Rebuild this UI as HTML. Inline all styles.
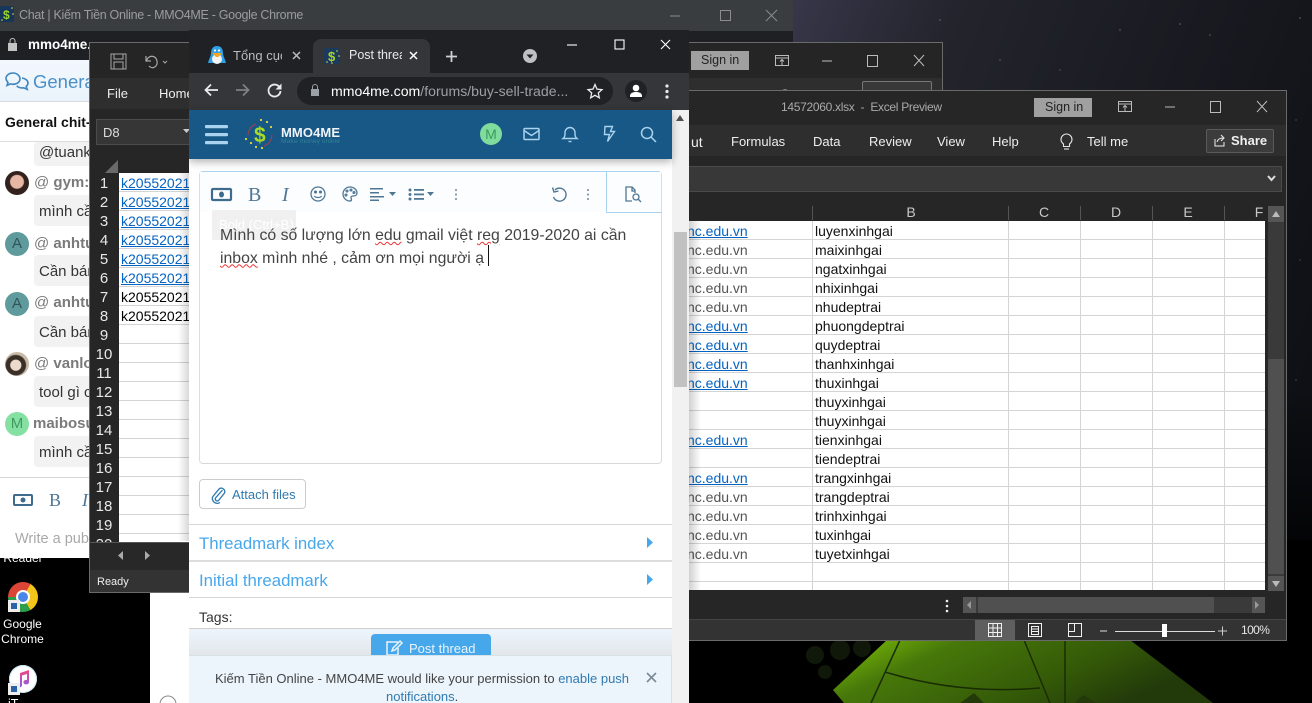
<!DOCTYPE html>
<html lang="vi"><head><meta charset="utf-8"><title>Chat</title>
<style>
html,body{margin:0;padding:0;width:1312px;height:703px;overflow:hidden;background:#000}
body{position:relative;font-family:"Liberation Sans","Noto Sans CJK SC",sans-serif}
.a{position:absolute}
.t{position:absolute;white-space:nowrap;line-height:1}
.w{position:absolute;overflow:hidden}
svg{position:absolute;overflow:visible}
.rn{position:absolute;left:0;width:28px;text-align:center;color:#e8e8e8;font-size:15px;line-height:19px;height:19px}
.k{position:absolute;left:31px;font-size:14px;line-height:18px;color:#0563c1;text-decoration:underline;white-space:nowrap}
.k.b{color:#000;text-decoration:none}
.lk{position:absolute;left:0;font-size:14px;line-height:18px;color:#0563c1;text-decoration:underline;white-space:nowrap}
.lk.g{color:#555;text-decoration:none}
.v{position:absolute;left:126px;font-size:14px;line-height:18px;color:#111;white-space:nowrap}
.bub{position:absolute;left:34px;width:80px;background:#f2f2f2;border-radius:4px}
.nm{position:absolute;font-size:15px;font-weight:bold;color:#7a7a7a;white-space:nowrap}
.mt{position:absolute;left:39px;font-size:15px;color:#333;white-space:nowrap}
.av{position:absolute;width:24px;height:24px;border-radius:50%;text-align:center;line-height:24px;font-size:15px}
.hd{position:absolute;top:205px;color:#c8c8c8;font-size:16px}
.rib{position:absolute;color:#eee;font-size:14px;white-space:nowrap}
</style></head><body>

<!-- wallpaper -->
<svg class="a" style="left:0;top:0" width="1312" height="703" viewBox="0 0 1312 703">
<defs>
<linearGradient id="sky" x1="0" y1="0" x2="1" y2="0.55"><stop offset="0" stop-color="#37374a"/><stop offset=".25" stop-color="#23242c"/><stop offset="1" stop-color="#0e1015"/></linearGradient>
<linearGradient id="sky2" x1="0" y1="0" x2="0" y2="1"><stop offset=".55" stop-color="#000" stop-opacity="0"/><stop offset=".85" stop-color="#000"/></linearGradient>
<linearGradient id="g1" x1="0" y1="0" x2="1" y2=".35"><stop offset="0" stop-color="#8fc80e"/><stop offset=".12" stop-color="#6aa608"/><stop offset=".3" stop-color="#47780a"/><stop offset=".7" stop-color="#345a08"/><stop offset="1" stop-color="#22390a"/></linearGradient>
</defs>
<rect x="790" y="0" width="522" height="703" fill="url(#sky)"/>
<rect x="790" y="0" width="522" height="703" fill="url(#sky2)"/>
<rect x="0" y="540" width="1312" height="163" fill="#000"/>
<g fill="#9a9aa8" opacity=".6"><circle cx="1180" cy="24" r=".8"/><circle cx="1210" cy="35" r=".7"/><circle cx="1120" cy="30" r=".7"/><circle cx="1300" cy="18" r=".8"/><circle cx="1296" cy="120" r=".6"/><circle cx="1000" cy="60" r=".7"/><circle cx="940" cy="20" r=".8"/><circle cx="1060" cy="70" r=".6"/><circle cx="1300" cy="260" r=".6"/><circle cx="1296" cy="380" r=".6"/></g>
<polygon points="887,640 1130,640 1213,703 844,703 833,690" fill="url(#g1)"/>
<path d="M900 640 L871 703 M1024 640 L1050 703 M1065 640 L1065 703 M885 672 Q960 695 1040 688" stroke="#1a2c04" stroke-width="1.500" fill="none"/>
<path d="M960 703l14-10 10 10zM1075 703l8-8 14 8z" fill="#24390a"/>
<g fill="#10180a"><circle cx="815" cy="655" r="9"/><circle cx="840" cy="650" r="10"/><circle cx="862" cy="648" r="9"/><circle cx="825" cy="672" r="7"/></g>
</svg>

<!-- white behind window -->
<div class="a" style="left:150px;top:558px;width:39px;height:145px;background:#fff"></div>
<svg style="left:158px;top:694px" width="22" height="20"><circle cx="10" cy="10" r="8" fill="none" stroke="#888"/></svg>

<!-- desktop icons -->
<div class="t" style="left:0;top:552px;width:46px;text-align:center;color:#fff;font-size:12px">Reader</div>
<div class="a" style="left:8px;top:582px;width:30px;height:30px;border-radius:50%;background:conic-gradient(from 30deg,#f3c41a 0 120deg,#2f9e4a 120deg 240deg,#db4437 240deg 360deg)"></div>
<div class="a" style="left:16px;top:590px;width:14px;height:14px;border-radius:50%;background:#4a86e8;border:2px solid #fff;box-sizing:border-box"></div>
<div class="a" style="left:8px;top:600px;width:12px;height:12px;background:#eee"></div>
<div class="a" style="left:11px;top:603px;width:6px;height:6px;background:#2a63a8"></div>
<div class="t" style="left:0;top:617px;width:45px;text-align:center;color:#fff;font-size:12px;line-height:15px;white-space:normal">Google Chrome</div>
<div class="a" style="left:9px;top:665px;width:28px;height:28px;border-radius:50%;background:#fff;box-shadow:inset 0 0 0 1px #bfe4f2"></div>
<svg style="left:15px;top:669px" width="16" height="20"><defs><linearGradient id="nt" x1="0" y1="0" x2="0" y2="1"><stop offset="0" stop-color="#f0477e"/><stop offset="1" stop-color="#8a5ee8"/></linearGradient></defs><path d="M5 4l9-3v12a2.800 2.300 0 11-2-2V5L7 6.500V16a2.800 2.300 0 11-2-2z" fill="url(#nt)"/></svg>
<div class="a" style="left:8px;top:683px;width:12px;height:12px;background:#eee"></div>
<div class="a" style="left:11px;top:686px;width:6px;height:6px;background:#2a63a8"></div>
<div class="t" style="left:8px;top:698px;color:#fff;font-size:12.500px">iT</div>

<!-- back chat window -->
<div class="w" style="left:0;top:0;width:793px;height:558px;background:#fff">
 <div class="a" style="left:0;top:0;width:793px;height:31px;background:#3a3d40"></div>
 <div class="a" style="left:0;top:31px;width:793px;height:29px;background:#1f2023"></div>
 <svg style="left:0;top:6px" width="16" height="18"><rect x="0" y="0" width="14" height="16" rx="2" fill="#16365a"/><text x="3" y="13" font-size="12" font-weight="bold" fill="#9fd42a" font-family="Liberation Sans">$</text><g fill="#e8d83a"><circle cx="12" cy="2" r=".8"/><circle cx="13" cy="8" r=".8"/><circle cx="2" cy="14" r=".8"/></g></svg>
 <div class="t" style="left:19px;top:9px;color:#9a9c9f;font-size:12.500px;letter-spacing:-.3px">Chat | Kiếm Tiền Online - MMO4ME - Google Chrome</div>
 <svg style="left:670px;top:8px" width="110" height="16"><path d="M0 8h10" stroke="#8a8c8f"/><rect x="50.500" y="2.500" width="10" height="10" fill="none" stroke="#8a8c8f"/><path d="M96 2l11 11M107 2L96 13" stroke="#8a8c8f"/></svg>
 <svg style="left:7px;top:38px" width="12" height="14"><rect x="1" y="5" width="9" height="8" fill="#c4c4c4"/><path d="M3 5V3a2.500 2.500 0 015 0v2" fill="none" stroke="#c4c4c4"/></svg>
 <div class="t" style="left:28px;top:38px;color:#fff;font-size:13.500px;font-weight:bold">mmo4me.</div>
 <div class="a" style="left:0;top:60px;width:793px;height:42px;background:linear-gradient(#f2f7fd,#eaf3fb);border-bottom:1px solid #d8d8d8;box-sizing:border-box"></div>
 <svg style="left:4px;top:71px" width="26" height="20" fill="none" stroke="#3e86c0" stroke-width="1.600"><path d="M9 2c-4 0-7 2.400-7 5.400 0 1.600 1 3 2 4l-1 3 3.500-1.500c1 .3 1.600.4 2.500.4 4 0 7-2.400 7-5.400S13 2 9 2z"/><path d="M18 7c3 .4 6 2.400 6 5 0 1.400-.7 2.500-1.800 3.400l1 3-3.500-1.600c-2.500 .5-5.500-.3-7-2"/></svg>
 <div class="t" style="left:33px;top:73px;color:#4a90c8;font-size:18.500px">General</div>
 <div class="t" style="left:5px;top:115px;color:#111;font-size:14px;font-weight:bold">General chit-</div>
 <div class="a" style="left:0;top:141px;width:90px;height:1px;background:#ddd"></div>
 <div class="bub" style="top:142px;height:24px"></div>
 <div class="mt" style="top:144px">@tuank</div>
 <div class="av" style="left:5px;top:171px;background:radial-gradient(circle at 50% 45%,#e8b8a4 0 36%,#33211e 42%)"></div>
 <div class="nm" style="left:34px;top:174px"><span style="font-weight:normal">@</span> gym:</div>
 <div class="bub" style="top:195px;height:31px"></div>
 <div class="mt" style="top:203px">mình cần</div>
 <div class="av" style="left:5px;top:232px;background:#5f9a9c;color:#2f5558">A</div>
 <div class="nm" style="left:34px;top:235px"><span style="font-weight:normal">@</span> anhtu</div>
 <div class="bub" style="top:255px;height:31px"></div>
 <div class="mt" style="top:263px">Cần bán</div>
 <div class="av" style="left:5px;top:292px;background:#5f9a9c;color:#2f5558">A</div>
 <div class="nm" style="left:34px;top:294px"><span style="font-weight:normal">@</span> anhtu</div>
 <div class="bub" style="top:316px;height:31px"></div>
 <div class="mt" style="top:324px">Cần bán</div>
 <div class="av" style="left:5px;top:352px;background:radial-gradient(circle at 45% 55%,#ecdacc 0 28%,#3a3028 32% 52%,#c8bca8 58%)"></div>
 <div class="nm" style="left:34px;top:355px"><span style="font-weight:normal">@</span> vanlo</div>
 <div class="bub" style="top:376px;height:31px"></div>
 <div class="mt" style="top:384px">tool gì c</div>
 <div class="av" style="left:5px;top:412px;background:#85e0a3;color:#3f9a5e">M</div>
 <div class="nm" style="left:33px;top:415px">maibosu</div>
 <div class="bub" style="top:436px;height:31px"></div>
 <div class="mt" style="top:444px">mình cần</div>
 <div class="a" style="left:0;top:477px;width:90px;height:1px;background:#d8d8d8"></div>
 <svg style="left:13px;top:494px" width="20" height="12"><rect x="1" y="1" width="18" height="10" rx="1" fill="#fff" stroke="#3f6b8c" stroke-width="2"/><circle cx="10" cy="6" r="2.500" fill="#3f6b8c"/></svg>
 <div class="t" style="left:49px;top:491px;color:#4a7698;font-size:18px;font-family:'Liberation Serif',serif">B</div>
 <div class="t" style="left:82px;top:491px;color:#4a7698;font-size:18px;font-style:italic;font-family:'Liberation Serif',serif">I</div>
 <div class="t" style="left:15px;top:532px;color:#a8a8a8;font-size:14.500px">Write a pub</div>
</div>

<!-- back excel window -->
<div class="w" style="left:89px;top:42px;width:854px;height:551px;background:#262626;border:1px solid #6a6a6a;box-sizing:border-box">
 <div class="a" style="left:0;top:0;width:854px;height:35px;background:#252525"></div>
 <div class="a" style="left:0;top:35px;width:854px;height:31px;background:#2e2e2e"></div>
 <svg style="left:20px;top:10px" width="90" height="20" fill="none" stroke="#a8a8a8"><rect x="1" y="1" width="15" height="15"/><rect x="4" y="1" width="9" height="5"/><rect x="4" y="9" width="9" height="7"/><path d="M39 13c4 4 9 0 8-5s-6-6-9-3l-2 3M36 3v5h5" stroke-width="1.200"/><path d="M53 8l2 2 2-2"/></svg>
 <div class="t" style="left:17px;top:44px;color:#eee;font-size:13px">File</div>
 <div class="t" style="left:69px;top:44px;color:#eee;font-size:13px">Home</div>
 <div class="a" style="left:6px;top:76px;width:100px;height:26px;background:#363636;border:1px solid #4c4c4c;box-sizing:border-box"></div>
 <div class="t" style="left:13px;top:83px;color:#ddd;font-size:13px">D8</div>
 <svg style="left:92px;top:85px" width="10" height="8"><path d="M1 1h7L4.500 5z" fill="#ccc"/></svg>
 <svg style="left:14px;top:116px" width="16" height="16"><path d="M14 1v13H1z" fill="#6a6a6a"/></svg>
 <div class="a" style="left:29px;top:130px;width:825px;height:369px;background:#fff repeating-linear-gradient(#fff 0 18px,#d4d4d4 18px 19px)"></div>
 <div class="a" style="left:0;top:130px;width:29px;height:369px;background:#262626;overflow:hidden">
  <div class="rn" style="top:1px">1</div><div class="rn" style="top:20px">2</div><div class="rn" style="top:39px">3</div><div class="rn" style="top:58px">4</div><div class="rn" style="top:77px">5</div><div class="rn" style="top:96px">6</div><div class="rn" style="top:115px">7</div><div class="rn" style="top:134px">8</div><div class="rn" style="top:153px">9</div><div class="rn" style="top:172px">10</div><div class="rn" style="top:191px">11</div><div class="rn" style="top:210px">12</div><div class="rn" style="top:229px">13</div><div class="rn" style="top:248px">14</div><div class="rn" style="top:267px">15</div><div class="rn" style="top:286px">16</div><div class="rn" style="top:305px">17</div><div class="rn" style="top:324px">18</div><div class="rn" style="top:343px">19</div><div class="rn" style="top:362px">20</div>
 </div>
 <div class="k" style="top:131px">k20552021</div><div class="k" style="top:150px">k20552021</div><div class="k" style="top:169px">k20552021</div><div class="k" style="top:188px">k20552021</div><div class="k" style="top:207px">k20552021</div><div class="k" style="top:226px">k20552021</div><div class="k b" style="top:245px">k20552021</div><div class="k b" style="top:264px">k20552021</div>
 <div class="a" style="left:0;top:499px;width:854px;height:28px;background:#282828;border-top:1px solid #555;box-sizing:border-box"></div>
 <svg style="left:28px;top:508px" width="40" height="10"><path d="M5 0v9L0 4.500z M27 0v9l5-4.500z" fill="#aaa"/></svg>
 <div class="a" style="left:0;top:527px;width:854px;height:23px;background:#333"></div>
 <div class="t" style="left:7px;top:534px;color:#eee;font-size:11px">Ready</div>
 <div class="a" style="left:601px;top:8px;width:58px;height:19px;background:#a0a0a0"></div>
 <div class="t" style="left:611px;top:11px;color:#222;font-size:12.500px">Sign in</div>
 <svg style="left:685px;top:10px" width="175" height="16" fill="none" stroke="#bbb"><rect x=".5" y="2.500" width="13" height="10"/><path d="M.5 5h13M7 12V7M5 8.500l2-2 2 2"/><path d="M47 8h10"/><rect x="92.500" y="2.500" width="10" height="11"/><path d="M139 2l10 11M149 2l-10 11"/></svg>
 <div class="a" style="left:772px;top:38px;width:68px;height:30px;border:1px solid #777;border-radius:2px;background:#383838"></div>
 <svg style="left:687px;top:45px" width="20" height="20" fill="none" stroke="#ddd"><circle cx="8" cy="8" r="6"/></svg>
 <div class="t" style="left:711px;top:46px;color:#eee;font-size:13px">Tell</div>
 <div class="t" style="left:790px;top:46px;color:#eee;font-size:13px;font-weight:bold">Sh</div>
</div>

<!-- front excel window -->
<div class="w" style="left:660px;top:90px;width:627px;height:551px;background:#262626;border:1px solid #6a6a6a;box-sizing:border-box">
 <div class="a" style="left:0;top:0;width:627px;height:34px;background:#262626"></div>
 <div class="a" style="left:0;top:34px;width:627px;height:31px;background:#2e2e2e"></div>
 <div class="t" style="left:120px;top:10px;color:#aaa;font-size:12px;letter-spacing:-.3px">14572060.xlsx &nbsp;-&nbsp; Excel Preview</div>
 <div class="a" style="left:373px;top:7px;width:58px;height:19px;background:#a0a0a0"></div>
 <div class="t" style="left:384px;top:10px;color:#222;font-size:12.500px">Sign in</div>
 <svg style="left:457px;top:9px" width="170" height="16" fill="none" stroke="#bbb"><rect x=".5" y="1.500" width="13" height="10"/><path d="M.5 4h13M7 11V6M5 7.500l2-2 2 2"/><path d="M47 7h10"/><rect x="92.500" y="1.500" width="10" height="11"/><path d="M139 1l10 11M149 1l-10 11"/></svg>
 <div class="rib" style="left:30px;top:43px">ut</div>
 <div class="rib" style="left:70px;top:43px;font-size:13px">Formulas</div>
 <div class="rib" style="left:152px;top:43px;font-size:13px">Data</div>
 <div class="rib" style="left:208px;top:43px;font-size:13px">Review</div>
 <div class="rib" style="left:276px;top:43px;font-size:13px">View</div>
 <div class="rib" style="left:331px;top:43px;font-size:13px">Help</div>
 <svg style="left:398px;top:41px" width="16" height="20" fill="none" stroke="#e6e6e6" stroke-width="1.100"><path d="M4.500 12C2.500 10.500 2 8.500 2 7.500a5.500 5.500 0 0111 0c0 1-.5 3-2.500 4.500v2.500h-6z"/><path d="M5 17h5"/></svg>
 <div class="rib" style="left:426px;top:43px;font-size:13px">Tell me</div>
 <div class="a" style="left:545px;top:38px;width:68px;height:24px;border:1px solid #5a5a5a;border-radius:2px;background:#3c3c3c;box-sizing:border-box"></div>
 <svg style="left:552px;top:43px" width="14" height="14" fill="none" stroke="#eee"><path d="M2 5v7h9V8M4 8c1-3 3-4 6-4M8 1l3 3-3 3"/></svg>
 <div class="t" style="left:570px;top:43px;color:#f0f0f0;font-size:13px;font-weight:bold">Share</div>
 <div class="a" style="left:0;top:75px;width:621px;height:26px;background:#383838;border:1px solid #4a4a4a;box-sizing:border-box"></div>
 <svg style="left:606px;top:84px" width="10" height="8" fill="none" stroke="#ddd" stroke-width="2"><path d="M1 1l3.500 4L8 1"/></svg>
 <div class="hd" style="left:237px;top:114px;width:26px;text-align:center;font-size:14px;line-height:15px">B</div>
 <div class="hd" style="left:372px;top:114px;width:22px;text-align:center;font-size:14px;line-height:15px">C</div>
 <div class="hd" style="left:444px;top:114px;width:22px;text-align:center;font-size:14px;line-height:15px">D</div>
 <div class="hd" style="left:516px;top:114px;width:22px;text-align:center;font-size:14px;line-height:15px">E</div>
 <div class="hd" style="left:591px;top:114px;width:14px;text-align:center;font-size:14px;line-height:15px">F</div>
 <div class="a" style="left:151px;top:115px;width:1px;height:14px;background:#555"></div>
 <div class="a" style="left:347px;top:115px;width:1px;height:14px;background:#555"></div>
 <div class="a" style="left:419px;top:115px;width:1px;height:14px;background:#555"></div>
 <div class="a" style="left:491px;top:115px;width:1px;height:14px;background:#555"></div>
 <div class="a" style="left:563px;top:115px;width:1px;height:14px;background:#555"></div>
 <div class="a" style="left:0;top:130px;width:604px;height:369px;background:repeating-linear-gradient(#fff 0 18px,#d4d4d4 18px 19px);overflow:hidden">
  <div class="a" style="left:151px;top:0;width:1px;height:369px;background:#d4d4d4"></div>
  <div class="a" style="left:347px;top:0;width:1px;height:369px;background:#d4d4d4"></div>
  <div class="a" style="left:419px;top:0;width:1px;height:369px;background:#d4d4d4"></div>
  <div class="a" style="left:491px;top:0;width:1px;height:369px;background:#d4d4d4"></div>
  <div class="a" style="left:563px;top:0;width:1px;height:369px;background:#d4d4d4"></div>
  <div class="a" style="left:26px;top:0;width:122px;height:369px">
   <div class="lk" style="top:1px">nc.edu.vn</div><div class="lk g" style="top:20px">nc.edu.vn</div><div class="lk g" style="top:39px">nc.edu.vn</div><div class="lk g" style="top:58px">nc.edu.vn</div><div class="lk g" style="top:77px">nc.edu.vn</div><div class="lk" style="top:96px">nc.edu.vn</div><div class="lk" style="top:115px">nc.edu.vn</div><div class="lk" style="top:134px">nc.edu.vn</div><div class="lk" style="top:153px">nc.edu.vn</div><div class="lk" style="top:210px">nc.edu.vn</div><div class="lk" style="top:248px">nc.edu.vn</div><div class="lk g" style="top:267px">nc.edu.vn</div><div class="lk g" style="top:286px">nc.edu.vn</div><div class="lk g" style="top:305px">nc.edu.vn</div><div class="lk g" style="top:324px">nc.edu.vn</div>
  </div>
  <div class="v" style="left:154px;top:1px">luyenxinhgai</div><div class="v" style="left:154px;top:20px">maixinhgai</div><div class="v" style="left:154px;top:39px">ngatxinhgai</div><div class="v" style="left:154px;top:58px">nhixinhgai</div><div class="v" style="left:154px;top:77px">nhudeptrai</div><div class="v" style="left:154px;top:96px">phuongdeptrai</div><div class="v" style="left:154px;top:115px">quydeptrai</div><div class="v" style="left:154px;top:134px">thanhxinhgai</div><div class="v" style="left:154px;top:153px">thuxinhgai</div><div class="v" style="left:154px;top:172px">thuyxinhgai</div><div class="v" style="left:154px;top:191px">thuyxinhgai</div><div class="v" style="left:154px;top:210px">tienxinhgai</div><div class="v" style="left:154px;top:229px">tiendeptrai</div><div class="v" style="left:154px;top:248px">trangxinhgai</div><div class="v" style="left:154px;top:267px">trangdeptrai</div><div class="v" style="left:154px;top:286px">trinhxinhgai</div><div class="v" style="left:154px;top:305px">tuxinhgai</div><div class="v" style="left:154px;top:324px">tuyetxinhgai</div>
 </div>
 <!-- vscroll -->
 <div class="a" style="left:607px;top:115px;width:16px;height:385px;background:#3a3a3a"></div>
 <div class="a" style="left:607px;top:115px;width:16px;height:16px;background:#555"></div>
 <svg style="left:611px;top:120px" width="9" height="6"><path d="M0 6h8L4 0z" fill="#bbb"/></svg>
 <div class="a" style="left:607px;top:268px;width:16px;height:215px;background:#505050"></div>
 <div class="a" style="left:607px;top:485px;width:16px;height:15px;background:#555"></div>
 <svg style="left:611px;top:490px" width="9" height="6"><path d="M0 0h8L4 6z" fill="#bbb"/></svg>
 <!-- hscroll -->
 <svg style="left:284px;top:508px" width="4" height="14"><circle cx="2" cy="2" r="1.300" fill="#eee"/><circle cx="2" cy="7" r="1.300" fill="#eee"/><circle cx="2" cy="12" r="1.300" fill="#eee"/></svg>
 <div class="a" style="left:302px;top:506px;width:302px;height:16px;background:#3a3a3a"></div>
 <div class="a" style="left:302px;top:506px;width:13px;height:16px;background:#555"></div>
 <div class="a" style="left:317px;top:506px;width:236px;height:16px;background:#505050"></div>
 <div class="a" style="left:591px;top:506px;width:13px;height:16px;background:#555"></div>
 <svg style="left:305px;top:510px" width="296" height="9"><path d="M5 0v8L1 4z M289 0v8l4-4z" fill="#999"/></svg>
 <!-- status -->
 <div class="a" style="left:0;top:528px;width:627px;height:22px;background:#333;border-top:1px solid #444;box-sizing:border-box"></div>
 <div class="a" style="left:314px;top:529px;width:40px;height:21px;background:#5f5f5f"></div>
 <svg style="left:327px;top:532px" width="180" height="16" fill="none" stroke="#f0f0f0"><rect x=".5" y=".5" width="13" height="13"/><path d="M.5 5h13M.5 9.500h13M5 .5v13M9.500 .5v13"/><rect x="40.500" y=".5" width="13" height="13"/><rect x="43.500" y="3.500" width="7" height="8"/><path d="M44 6h6M44 8.500h6"/><rect x="80.500" y=".5" width="13" height="13"/><path d="M80.500 8.500h6v-8"/></svg>
 <svg style="left:438px;top:533px" width="120" height="14"><path d="M1 7h7M16 7.500h100" stroke="#ddd" fill="none"/></svg>
 <div class="a" style="left:501px;top:533px;width:5px;height:13px;background:#fff"></div>
 <svg style="left:556px;top:534px" width="12" height="12" stroke="#ccc"><path d="M1 6h9M5.500 1.500v9"/></svg>
 <div class="t" style="left:580px;top:533px;color:#e6e6e6;font-size:12px;letter-spacing:-.6px">100%</div>
</div>

<!-- shadow from chrome window -->
<div class="a" style="left:689px;top:221px;width:12px;height:369px;background:linear-gradient(90deg,rgba(0,0,0,.18),rgba(0,0,0,0))"></div>
<div class="a" style="left:178px;top:173px;width:11px;height:368px;background:linear-gradient(270deg,rgba(0,0,0,.15),rgba(0,0,0,0))"></div>

<!-- front chrome window -->
<div class="w" style="left:189px;top:30px;width:500px;height:673px;background:#202124">
 <!-- tabs -->
 <div class="a" style="left:124px;top:9px;width:117px;height:34px;background:#35363a;border-radius:8px 8px 0 0"></div>
 <svg style="left:19px;top:16px" width="18" height="18"><path d="M9 0c4 0 6 3 6 7 0 3 2 6 3 10H0c1-4 3-7 3-10 0-4 2-7 6-7z" fill="#2f9fe6"/><ellipse cx="9" cy="13" rx="5" ry="5" fill="#f4f4f4"/><path d="M4 7h9l1 1-4 3H8z" fill="#f5a623"/><circle cx="7" cy="4.500" r="1.100" fill="#fff"/><circle cx="11" cy="4.500" r="1.100" fill="#fff"/></svg>
 <div class="t" style="left:44px;top:19px;width:49px;overflow:hidden;color:#b8bbbf;font-size:13px">Tổng cục</div>
 <svg style="left:103px;top:21px" width="10" height="10" stroke="#b8bbbf" stroke-width="1.500"><path d="M1 1l7 7M8 1L1 8"/></svg>
 <div class="a" style="left:135px;top:18px;width:16px;height:16px;background:#1b3a5c;border-radius:2px"></div>
 <div class="t" style="left:139px;top:20px;color:#a8d82a;font-size:13px;font-weight:bold">$</div>
 <svg style="left:135px;top:18px" width="16" height="16" fill="#e8d83a"><circle cx="13" cy="3" r=".8"/><circle cx="15" cy="8" r=".8"/><circle cx="3" cy="14" r=".8"/><circle cx="8" cy="15" r=".8"/></svg>
 <div class="t" style="left:160px;top:19px;width:53px;overflow:hidden;color:#e8eaed;font-size:12.500px">Post threa</div>
 <svg style="left:220px;top:21px" width="10" height="10" stroke="#fff" stroke-width="1.500"><path d="M1 1l7 7M8 1L1 8"/></svg>
 <svg style="left:256px;top:20px" width="14" height="14" stroke="#cfd1d4" stroke-width="1.800"><path d="M1 6.500h11M6.500 1v11"/></svg>
 <svg style="left:333px;top:18px" width="16" height="16"><circle cx="8" cy="8" r="7" fill="#bdc1c6"/><path d="M4.500 6.500h7L8 10.500z" fill="#202124"/></svg>
 <svg style="left:378px;top:9px" width="110" height="14" fill="none" stroke="#fff" stroke-width="1.100"><path d="M0 6h10"/><rect x="48" y="1" width="9" height="9"/><path d="M94 1l9 9M103 1l-9 9"/></svg>
 <!-- toolbar -->
 <div class="a" style="left:0;top:43px;width:500px;height:37px;background:#35363a"></div>
 <svg style="left:15px;top:53px" width="15" height="14" fill="none" stroke="#e8eaed" stroke-width="1.800"><path d="M14 7H2M7 1.500L1.500 7 7 12.500"/></svg>
 <svg style="left:46px;top:53px" width="15" height="14" fill="none" stroke="#7d8085" stroke-width="1.800"><path d="M1 7h12M8 1.500L13.500 7 8 12.500"/></svg>
 <svg style="left:78px;top:53px" width="15" height="15"><path d="M12.500 4.200A6 6 0 1 0 13.500 8" fill="none" stroke="#e8eaed" stroke-width="1.800"/><path d="M14.500 .5v6h-6z" fill="#e8eaed"/></svg>
 <div class="a" style="left:108px;top:47px;width:316px;height:28px;background:#202124;border-radius:14px"></div>
 <svg style="left:120px;top:53px" width="12" height="14"><rect x="2" y="6" width="8" height="7" fill="#9aa0a6"/><path d="M3.500 6V4a2.500 2.500 0 015 0v2" fill="none" stroke="#9aa0a6"/></svg>
 <div class="t" style="left:142px;top:54px;color:#fff;font-size:14.100px">mmo4me.com<span style="color:#9aa0a6">/forums/buy-sell-trade...</span></div>
 <svg style="left:398px;top:53px" width="16" height="15" fill="none" stroke="#e8eaed" stroke-width="1.300"><path d="M8 1.500l2 4.600 5 .5-3.700 3.300 1 4.900L8 12.300 3.700 14.800l1-4.900L1 6.600l5-.5z"/></svg>
 <svg style="left:436px;top:50px" width="22" height="22"><circle cx="11" cy="11" r="11" fill="#202124"/><circle cx="11" cy="8" r="3.300" fill="#fff"/><path d="M5 16c0-3 3-4 6-4s6 1 6 4v1H5z" fill="#fff"/></svg>
 <svg style="left:475px;top:54px" width="6" height="16" fill="#e8eaed"><circle cx="3" cy="2" r="1.600"/><circle cx="3" cy="7.500" r="1.600"/><circle cx="3" cy="13" r="1.600"/></svg>

 <!-- page -->
 <div class="a" style="left:0;top:80px;width:483px;height:593px;background:#fff"></div>
 <div class="a" style="left:483px;top:80px;width:17px;height:593px;background:#f1f1f1"></div>
 <svg style="left:487px;top:85px" width="9" height="6"><path d="M0 6h8L4 0z" fill="#505050"/></svg>
 <div class="a" style="left:485px;top:202px;width:13px;height:155px;background:#c1c1c1"></div>
 <!-- header -->
 <div class="a" style="left:0;top:80px;width:483px;height:49px;background:#185886;box-shadow:0 3px 8px rgba(0,0,0,.3)"></div>
 <svg style="left:16px;top:95px" width="23" height="20" fill="#a9d3ee"><rect y="0" width="23" height="3.300" rx="1"/><rect y="8" width="23" height="3.300" rx="1"/><rect y="16" width="23" height="3.300" rx="1"/></svg>
 <svg style="left:55px;top:89px" width="34" height="32" fill="none"><path d="M4 16A12 12 0 0112 5" stroke="#a93e4c" stroke-width="1"/><path d="M28 16A12 12 0 0120 27" stroke="#a93e4c" stroke-width="1"/><g fill="#e8d83a"><circle cx="7" cy="24" r="1.100"/><circle cx="12" cy="28" r="1.100"/><circle cx="18" cy="29" r="1.100"/><circle cx="17" cy="1" r="1.100"/><circle cx="23" cy="3" r="1.100"/><circle cx="27" cy="8" r="1.100"/><circle cx="2" cy="20" r="1.100"/></g><text x="10" y="23" font-family="Liberation Sans" font-weight="bold" font-size="21" fill="#a8dc2a">$</text></svg>
 <div class="t" style="left:92px;top:96px;color:#f0f4f7;font-size:13px;font-weight:bold;letter-spacing:.1px">MMO4ME</div>
 <div class="t" style="left:92px;top:109px;color:#2f8296;font-size:6.800px">Make money online</div>
 <div class="a" style="left:291px;top:93px;width:22px;height:22px;border-radius:50%;background:#7fdc9c;color:#3c9a5e;font-size:14px;text-align:center;line-height:22px">M</div>
 <svg style="left:334px;top:97px" width="17" height="15" fill="none" stroke="#a9d3ee" stroke-width="1.500"><rect x="1" y="1.500" width="15" height="11" rx="1"/><path d="M1 3.500l7.500 5 7.500-5"/></svg>
 <svg style="left:372px;top:96px" width="18" height="17" fill="none" stroke="#a9d3ee" stroke-width="1.400"><path d="M2 12.500c2-1.500 2-3 2-6a5 5 0 0110 0c0 3 0 4.500 2 6z"/><path d="M7.500 15.500h3"/></svg>
 <svg style="left:412px;top:95px" width="16" height="18" fill="none" stroke="#a9d3ee" stroke-width="1.400"><path d="M4 1.500h7.500L9.500 6.500h4L6.500 16.500l2-7h-5z"/></svg>
 <svg style="left:451px;top:96px" width="17" height="17" fill="none" stroke="#a9d3ee" stroke-width="1.500"><circle cx="7" cy="7" r="5.500"/><path d="M11 11l5 5"/></svg>

 <!-- editor -->
 <div class="a" style="left:10px;top:141px;width:463px;height:293px;border:1px solid #a8d4f0;border-bottom-color:#d8d8d8;border-left-color:#c7e2f4;border-right-color:#c7e2f4;border-radius:4px;box-sizing:border-box;background:#fff"></div>
 <div class="a" style="left:11px;top:142px;width:461px;height:40px;background:#fbfdff"></div>
 <div class="a" style="left:417px;top:141px;width:1px;height:42px;background:#a8d4f0"></div>
 <div class="a" style="left:417px;top:182px;width:56px;height:1px;background:#a8d4f0"></div>
 <svg style="left:22px;top:158px" width="22" height="13"><rect x="1" y="1" width="19" height="11" rx="1" fill="#fff" stroke="#3f6b8c" stroke-width="2.200"/><ellipse cx="10.500" cy="6.500" rx="2.500" ry="3" fill="#3f6b8c"/></svg>
 <div class="t" style="left:59px;top:155px;color:#4f7794;font-size:20px;font-family:'Liberation Serif',serif">B</div>
 <div class="t" style="left:93px;top:155px;color:#4f7794;font-size:20px;font-style:italic;font-family:'Liberation Serif',serif">I</div>
 <svg style="left:121px;top:156px" width="16" height="16" fill="none" stroke="#4f7794" stroke-width="1.300"><circle cx="8" cy="8" r="7"/><circle cx="5.500" cy="6" r=".9" fill="#4f7794"/><circle cx="10.500" cy="6" r=".9" fill="#4f7794"/><path d="M4.500 10c1 2 6 2 7 0"/></svg>
 <svg style="left:153px;top:156px" width="16" height="16" fill="none" stroke="#4f7794" stroke-width="1.300"><path d="M8 1a7 7 0 100 14c2 0 1.500-2 1-3s.5-2 2-2 4 0 4-3c0-3-3-6-7-6z"/><circle cx="5" cy="5" r=".9"/><circle cx="9" cy="4" r=".9"/><circle cx="12" cy="6.500" r=".9"/><circle cx="4" cy="9" r=".9"/></svg>
 <svg style="left:181px;top:158px" width="28" height="13" fill="#4f7794"><rect width="13" height="1.500"/><rect y="4" width="9" height="1.500"/><rect y="8" width="14" height="1.500"/><rect y="11.500" width="9" height="1.500"/><path d="M19 4h7l-3.500 4z"/></svg>
 <svg style="left:219px;top:158px" width="28" height="13" fill="#4f7794"><circle cx="2" cy="2" r="1.500"/><circle cx="2" cy="6.500" r="1.500"/><circle cx="2" cy="11" r="1.500"/><rect x="6" y="1" width="10" height="1.800"/><rect x="6" y="5.500" width="10" height="1.800"/><rect x="6" y="10" width="10" height="1.800"/><path d="M19 4h7l-3.500 4z"/></svg>
 <svg style="left:265px;top:158px" width="4" height="13" fill="#8a9aa6"><circle cx="2" cy="2" r="1.100"/><circle cx="2" cy="6.500" r="1.100"/><circle cx="2" cy="11" r="1.100"/></svg>
 <svg style="left:362px;top:156px" width="17" height="16" fill="none" stroke="#4f7794" stroke-width="1.400"><path d="M4 4a6.500 6.500 0 11-1.500 7"/><path d="M1.500 1.500L3 6l4.500-1"/></svg>
 <svg style="left:397px;top:158px" width="4" height="13" fill="#8a9aa6"><circle cx="2" cy="2" r="1.100"/><circle cx="2" cy="6.500" r="1.100"/><circle cx="2" cy="11" r="1.100"/></svg>
 <svg style="left:435px;top:156px" width="18" height="17" fill="none" stroke="#4f7794" stroke-width="1.300"><path d="M8 15H2V1h6l3 3v3M8 1v4h3"/><circle cx="12" cy="11" r="3"/><path d="M14 13l3 3"/></svg>
 <!-- tooltip -->
 <div class="a" style="left:23px;top:180px;width:84px;height:30px;background:#f0f0f0;border-radius:2px"></div>
 <div class="t" style="left:30px;top:188px;color:#fff;font-size:13px">Bold (Ctrl+B)</div>
 <div class="t" style="left:31px;top:195px;color:#444;font-size:15.800px;line-height:22.500px;white-space:nowrap">Mình có số lượng lớn <span style="text-decoration:underline wavy #e33 1px">edu</span> gmail việt <span style="text-decoration:underline wavy #e33 1px">reg</span> 2019-2020 ai cần<br><span style="text-decoration:underline wavy #e33 1px">inbox</span> mình nhé , cảm ơn mọi người ạ</div>
 <div class="a" style="left:299px;top:215px;width:1px;height:21px;background:#111"></div>

 <!-- attach -->
 <div class="a" style="left:10px;top:449px;width:107px;height:30px;border:1px solid #ccc;border-radius:4px;box-sizing:border-box;background:#fff"></div>
 <svg style="left:21px;top:456px" width="16" height="17" fill="none" stroke="#2f7ab0" stroke-width="1.300"><path d="M12.500 4l-7 8a2 2 0 003 2.500l6-7.500a3.500 3.500 0 00-5.500-4l-6.500 8a5 5 0 007.500 5.500"/></svg>
 <div class="t" style="left:43px;top:458px;color:#2f7ab0;font-size:13px">Attach files</div>
 <div class="a" style="left:0;top:494px;width:483px;height:1px;background:#d6d6d6"></div>
 <div class="t" style="left:10px;top:506px;color:#47a7eb;font-size:16.800px">Threadmark index</div>
 <svg style="left:457px;top:506px" width="8" height="13"><path d="M1 1l6 5.500-6 5.500z" fill="#47a7eb"/></svg>
 <div class="a" style="left:0;top:530px;width:483px;height:2px;background:#dcdcdc"></div>
 <div class="t" style="left:10px;top:543px;color:#47a7eb;font-size:16.800px">Initial threadmark</div>
 <svg style="left:457px;top:543px" width="8" height="13"><path d="M1 1l6 5.500-6 5.500z" fill="#47a7eb"/></svg>
 <div class="a" style="left:0;top:567px;width:483px;height:1px;background:#d6d6d6"></div>
 <div class="t" style="left:10px;top:580px;color:#333;font-size:14px">Tags:</div>
 <div class="a" style="left:0;top:598px;width:483px;height:28px;background:linear-gradient(#edf5fc,#e2e6ea);border-top:1px solid #cfcfcf;box-sizing:border-box"></div>
 <div class="a" style="left:182px;top:604px;width:120px;height:26px;background:#47a7eb;border-radius:4px 4px 0 0"></div>
 <svg style="left:196px;top:609px" width="20" height="18" fill="none" stroke="#e8f4fc" stroke-width="1.500"><path d="M13 3H2v13h11V9"/><path d="M7 12l1-3 7-7 2 2-7 7z"/></svg>
 <div class="t" style="left:220px;top:612px;color:#e8f4fc;font-size:13px">Post thread</div>
 <div class="a" style="left:0;top:625px;width:483px;height:48px;background:#edf5fc;border-top:1px solid #d8e0e8;border-right:1px solid #d8e0e8;box-sizing:border-box"></div>
 <div class="t" style="left:26px;top:642px;color:#444;font-size:13px">Kiếm Tiền Online - MMO4ME would like your permission to <span style="color:#2f7ab0">enable push</span></div>
 <div class="t" style="left:197px;top:660px;color:#2f7ab0;font-size:13px">notifications<span style="color:#444">.</span></div>
 <svg style="left:457px;top:642px" width="12" height="12" stroke="#7a8a96" stroke-width="1.600"><path d="M1 1l9 9M10 1l-9 9"/></svg>
</div>
</body></html>
